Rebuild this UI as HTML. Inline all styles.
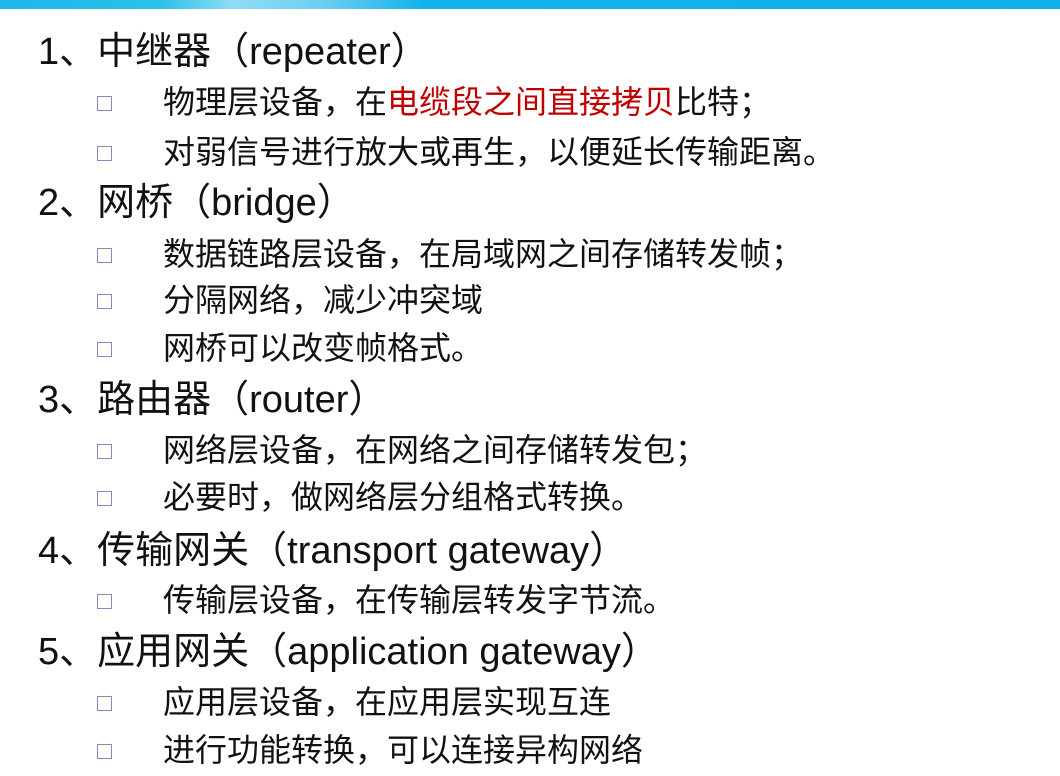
<!DOCTYPE html>
<html><head><meta charset="utf-8"><style>
html,body{margin:0;padding:0;background:#fff;}
body{width:1060px;height:776px;position:relative;overflow:hidden;font-family:"Liberation Sans","Noto Sans CJK SC",sans-serif;color:#111;}
.bar{position:absolute;left:0;top:0;width:1060px;height:9px;background:linear-gradient(90deg,#1fb6e8 0%,#2bc0ec 15%,#8fdcf5 22%,#6fd0f2 30%,#12b2ea 40%,#0fb0ea 100%);}
.h{position:absolute;left:38px;font-size:38px;line-height:44px;white-space:nowrap;}
.s{position:absolute;left:163px;font-size:32px;line-height:40px;white-space:nowrap;}
.b{position:absolute;left:97px;width:15px;height:15px;border:1.5px solid #8c87b8;box-sizing:border-box;}
.r{color:#c00000;}
</style></head><body>
<div class="bar"></div>
<div class="h" style="top:30px">1、中继器（repeater）</div>
<div class="b" style="top:96px"></div><div class="s" style="top:82px">物理层设备，在<span class="r">电缆段之间直接拷贝</span>比特；</div>
<div class="b" style="top:146px"></div><div class="s" style="top:132px">对弱信号进行放大或再生，以便延长传输距离。</div>
<div class="h" style="top:181px">2、网桥（bridge）</div>
<div class="b" style="top:248px"></div><div class="s" style="top:234px">数据链路层设备，在局域网之间存储转发帧；</div>
<div class="b" style="top:294px"></div><div class="s" style="top:280px">分隔网络，减少冲突域</div>
<div class="b" style="top:342px"></div><div class="s" style="top:328px">网桥可以改变帧格式。</div>
<div class="h" style="top:378px">3、路由器（router）</div>
<div class="b" style="top:444px"></div><div class="s" style="top:430px">网络层设备，在网络之间存储转发包；</div>
<div class="b" style="top:491px"></div><div class="s" style="top:477px">必要时，做网络层分组格式转换。</div>
<div class="h" style="top:529px">4、传输网关（transport gateway）</div>
<div class="b" style="top:594px"></div><div class="s" style="top:580px">传输层设备，在传输层转发字节流。</div>
<div class="h" style="top:630px">5、应用网关（application gateway）</div>
<div class="b" style="top:696px"></div><div class="s" style="top:682px">应用层设备，在应用层实现互连</div>
<div class="b" style="top:744px"></div><div class="s" style="top:730px">进行功能转换，可以连接异构网络</div>
</body></html>
